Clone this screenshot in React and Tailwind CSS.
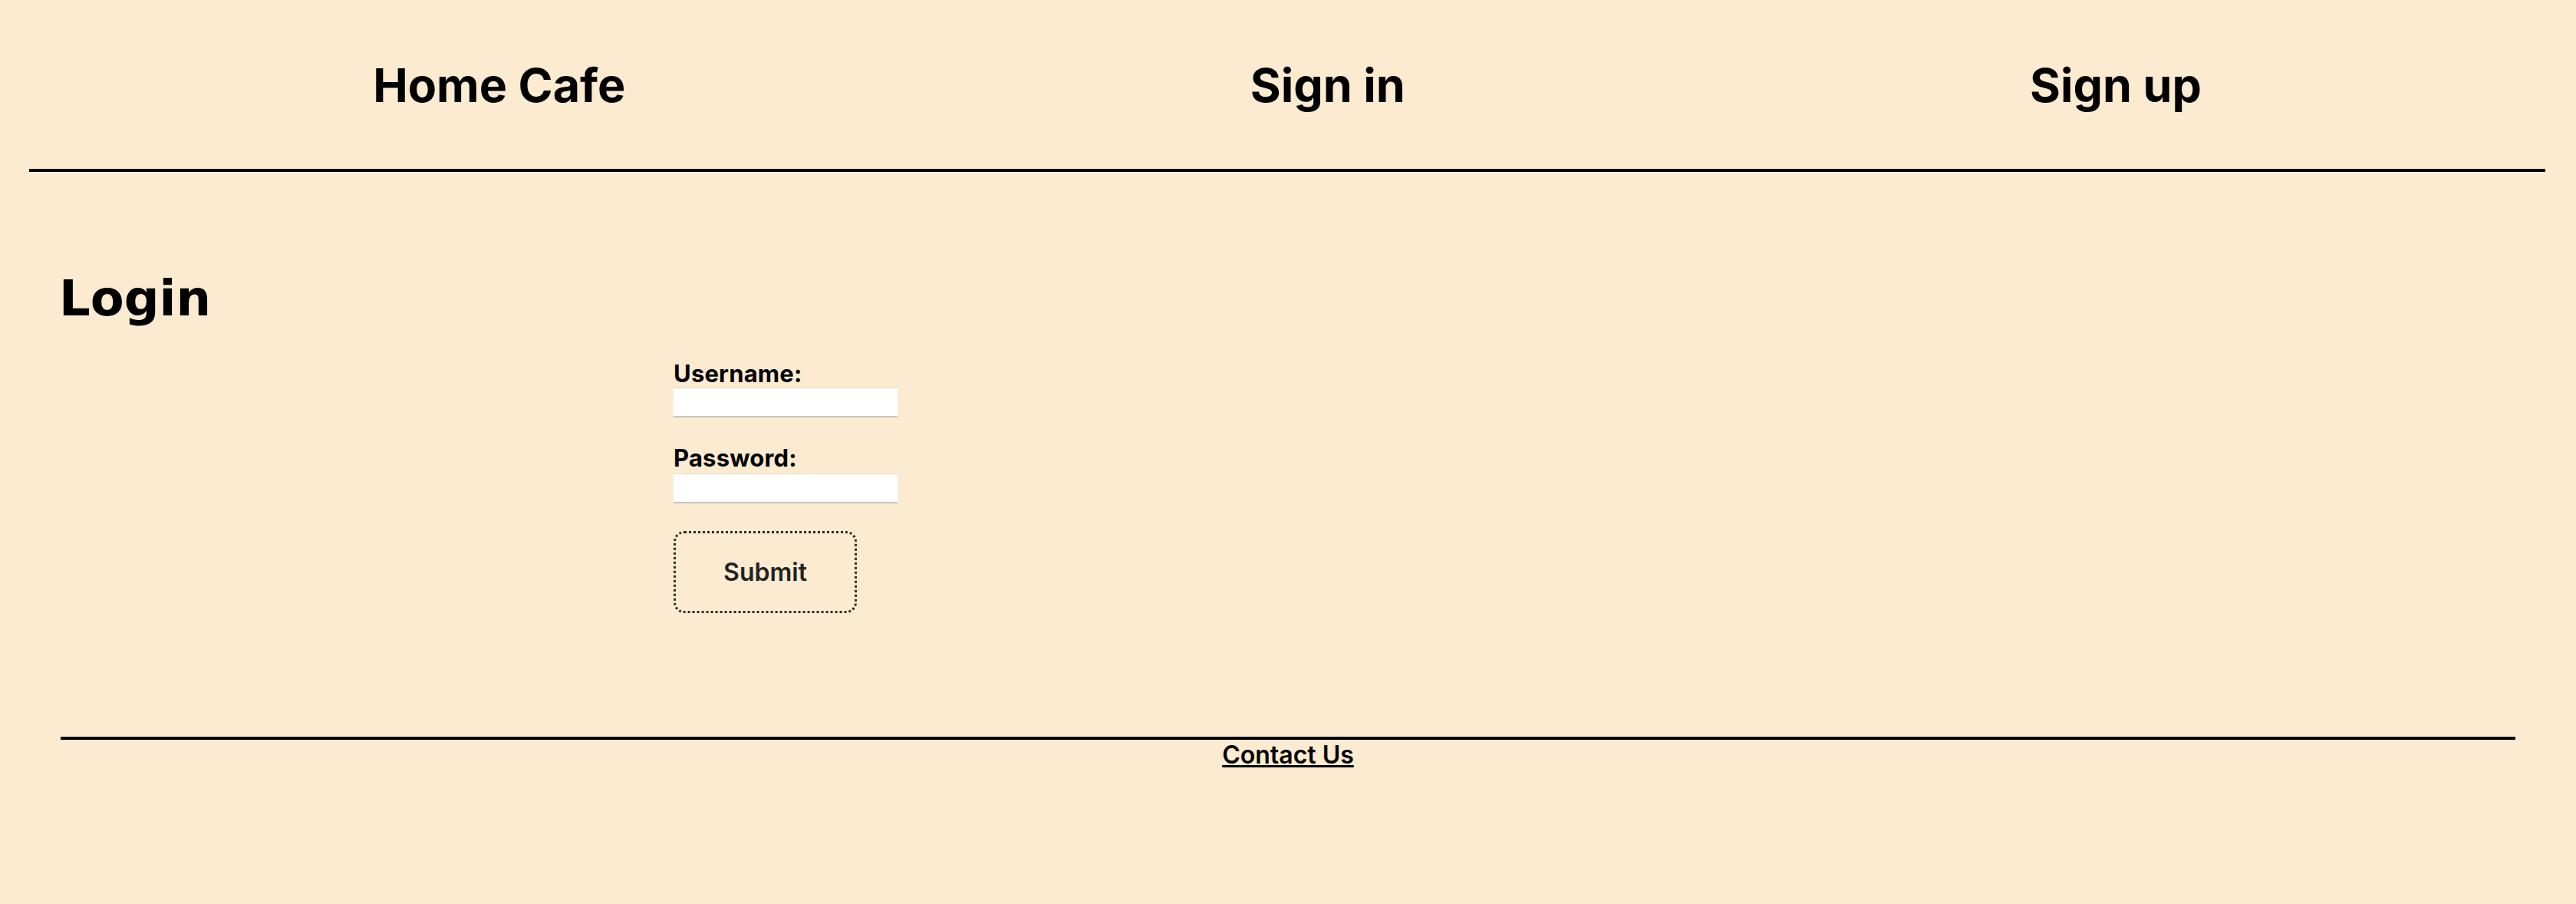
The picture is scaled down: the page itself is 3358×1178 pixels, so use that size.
import React, { useState } from "react";

function App() {
  const [formData, setFormData] = useState({ username: "", password: "" });

  const handleChange = (e) => {
    const { name, value } = e.target;
    setFormData((prev) => ({ ...prev, [name]: value }));
  };

  const handleSubmit = (e) => {
    e.preventDefault();
  };

  return (
    <div className="min-h-screen bg-[#fcebd0] font-['Inter','Liberation_Sans',sans-serif] text-black">
      {/* Header */}
      <header className="ml-[38px] mr-[40px] border-b-4 border-black pt-[74px] pb-[71px]">
        <nav className="flex justify-around px-[41px]">
          <a href="#" className="text-[61px] font-bold leading-[75px]">
            Home Cafe
          </a>
          <a href="#" className="text-[61px] font-bold leading-[75px]">
            Sign in
          </a>
          <a href="#" className="text-[61px] font-bold leading-[75px]">
            Sign up
          </a>
        </nav>
      </header>

      {/* Login form */}
      <main className="px-[79px]">
        <h1 className="mt-[128px] -ml-[2px] font-['DejaVu_Sans',sans-serif] text-[64px] font-bold leading-[75px]">
          Login
        </h1>

        <form onSubmit={handleSubmit} className="ml-[799px] mt-[41px] flex w-[292px] flex-col">
          <label htmlFor="username" className="text-[31px] font-bold leading-[37px] tracking-[0.2px]">
            Username:
          </label>
          <input
            id="username"
            name="username"
            type="text"
            value={formData.username}
            onChange={handleChange}
            className="h-[39px] w-[292px] border-t border-b-2 border-t-[#e8dbc2] border-b-[#cbc6bd] bg-white px-2 text-[20px] outline-none"
          />

          <label htmlFor="password" className="mt-[34px] text-[31px] font-bold leading-[37px] tracking-[0.2px]">
            Password:
          </label>
          <input
            id="password"
            name="password"
            type="password"
            value={formData.password}
            onChange={handleChange}
            className="mt-[2px] h-[39px] w-[292px] border-t border-b-2 border-t-[#e8dbc2] border-b-[#cbc6bd] bg-white px-2 text-[20px] outline-none"
          />

          <button
            type="submit"
            className="mt-[36px] flex h-[107px] w-[239px] items-center justify-center rounded-[14px] border-[3px] border-dotted border-[#2d2a26] text-[32px] font-semibold text-[#222]"
          >
            Submit
          </button>
        </form>

        {/* Footer */}
        <footer className="mt-[161px] border-t-4 border-black text-center">
          <a href="#" className="text-[32px] font-semibold leading-[39px] underline">
            Contact Us
          </a>
        </footer>
      </main>
    </div>
  );
}

export default App;
